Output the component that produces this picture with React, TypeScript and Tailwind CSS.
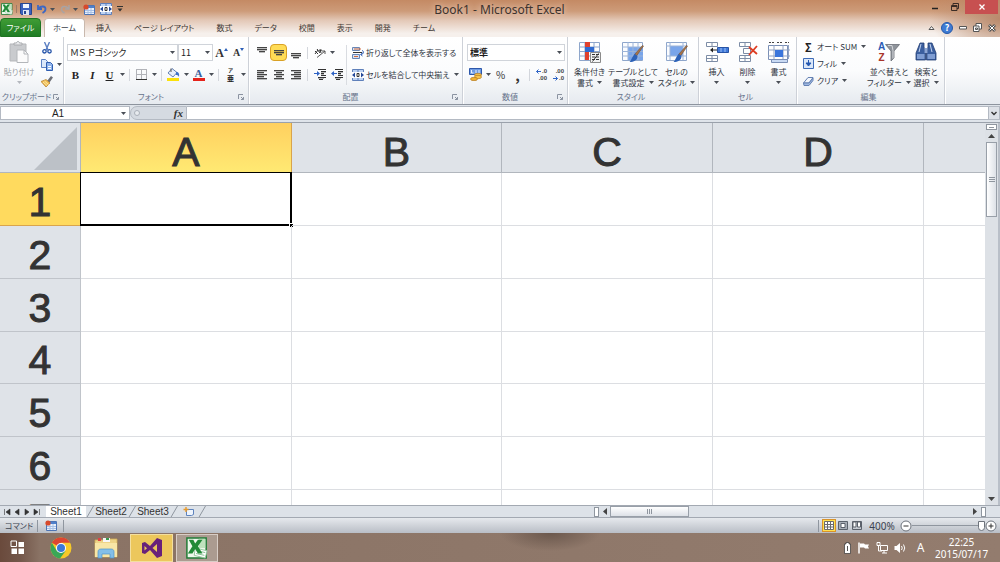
import React from 'react';
import clsx from 'clsx';

interface ChildrenProps {
  children: React.ReactNode;
}

interface IconProps extends ChildrenProps {
  w?: number;
  h?: number;
  box?: string;
}

const Icon: React.FC<IconProps> = ({ w = 14, h = 14, box, children }) => (
  <svg width={w} height={h} viewBox={box ?? `0 0 ${w} ${h}`} fill="none" className="shrink-0" aria-hidden="true">
    {children}
  </svg>
);

const Caret: React.FC<{ faded?: boolean }> = ({ faded }) => (
  <Icon w={5} h={3}>
    <path d="M0 0h5L2.5 3z" fill={faded ? '#b4b8be' : '#4a4f57'} />
  </Icon>
);

/* ---------- ribbon building blocks ---------- */

interface GroupProps extends ChildrenProps {
  label: string;
  className: string;
  launcher?: boolean;
}

const Group: React.FC<GroupProps> = ({ label, className, launcher, children }) => (
  <section
    aria-label={label}
    className={clsx('flex shrink-0 flex-col border-r border-[#cdd1d8] shadow-[1px_0_0_#ffffff]', className)}
  >
    <div className="flex h-[53px]">{children}</div>
    <div className="flex h-[13px] items-center pr-1 whitespace-nowrap text-[#66728a]">
      <span className="flex-1 text-center">{label}</span>
      {launcher && (
        <button aria-label={`${label}の詳細`}>
          <Icon w={6} h={6}>
            <path d="M0.5 5V0.5H5M3 3l2.5 2.5M5.5 3v2.500H3" stroke="#8b93a1" />
          </Icon>
        </button>
      )}
    </div>
  </section>
);

interface ToolProps extends ChildrenProps {
  label: string;
  active?: boolean;
  menu?: boolean;
}

const Tool: React.FC<ToolProps> = ({ label, active, menu, children }) => (
  <button aria-label={label} className="flex h-[17px] shrink-0 items-center">
    <span
      className={clsx(
        'flex h-[17px] w-[17px] items-center justify-center',
        active && 'rounded-sm border border-[#d9a126] bg-[#ffdc55]'
      )}
    >
      {children}
    </span>
    {menu && (
      <span className="flex w-2 justify-center">
        <Caret />
      </span>
    )}
  </button>
);

const Sep = () => <span className="mx-[3px] h-3 w-px shrink-0 bg-[#d3d6dc]" />;

interface BigToolProps extends ChildrenProps {
  lines: string[];
  className?: string;
  faded?: boolean;
}

const BigTool: React.FC<BigToolProps> = ({ lines, className, faded, children }) => (
  <button
    className={clsx(
      'flex shrink-0 flex-col items-center pt-1 leading-[11px] whitespace-nowrap',
      faded ? 'text-[#9a9da3]' : 'text-[#2f353f]',
      className
    )}
  >
    <span className="mb-[3px] flex h-[22px] items-center">{children}</span>
    <span>{lines[0]}</span>
    <span className="flex h-[11px] items-center gap-1">
      {lines[1]}
      <Caret faded={faded} />
    </span>
  </button>
);

const SmallTool: React.FC<ChildrenProps & { text: string; menu?: boolean }> = ({ text, menu, children }) => (
  <button className="flex h-[17px] items-center gap-[2px] whitespace-nowrap text-[#2f353f]">
    <span className="flex w-[13px] justify-center">{children}</span>
    {text}
    {menu && (
      <span className="ml-[2px]">
        <Caret />
      </span>
    )}
  </button>
);

interface SelectProps {
  label: string;
  value: string;
  options: string[];
  className: string;
}

const SelectBox: React.FC<SelectProps> = ({ label, value, options, className }) => (
  <div className={clsx('relative h-[17px] shrink-0 text-[9px]', className)}>
    <select
      aria-label={label}
      defaultValue={value}
      className="h-full w-full appearance-none border border-[#d0d4da] bg-white pl-[2px] text-[#1e1e1e] outline-none"
    >
      {options.map((o) => (
        <option key={o}>{o}</option>
      ))}
    </select>
    <span className="pointer-events-none absolute top-[7px] right-[3px]">
      <Caret />
    </span>
  </div>
);

/* ---------- icons ---------- */

const Lines: React.FC<{ rows: [number, number][]; y?: number }> = ({ rows, y = 0 }) => (
  <Icon w={12} h={12}>
    {rows.map(([x, width], i) => (
      <g key={i}>
        <path d={`M${x} ${y + i * 2 + 0.5}h${width}`} stroke="#444" />
        <path d={`M${x} ${y + i * 2 + 1.5}h${width}`} stroke="#444" strokeOpacity="0.35" />
      </g>
    ))}
  </Icon>
);

const ExcelLogo: React.FC<{ size: number }> = ({ size }) => (
  <Icon w={size} h={size} box="0 0 24 24">
    <path d="M1 1h21v22H1z" fill="#eef8ec" stroke="#1f7a34" strokeWidth="1.6" />
    <path d="M14 2h7v10h-7z" fill="#bfe2bd" />
    <path d="M10 12l13 3-2 8-12-3z" fill="#fff" stroke="#8fc498" />
    <path d="M12 15l9 2M11 18l9 2" stroke="#7dbb88" />
    <path d="M3 3h5l2 4 3-4h5l-5 7 5 8h-5l-3-5-3 5H2l5-8z" fill="#218a37" />
  </Icon>
);

const SaveIcon = () => (
  <Icon w={12} h={12}>
    <path d="M0.5 0.5h11v11h-10l-1-1z" fill="#3c62bd" stroke="#27468f" />
    <path d="M3 1h6v4H3z" fill="#f2f6fd" />
    <path d="M3 7h6v5H3z" fill="#dde5f3" />
    <path d="M4 8h2v3H4z" fill="#27468f" />
  </Icon>
);

const MacroIcon = () => (
  <Icon w={12} h={11}>
    <path d="M1.5 1.5h10v9h-10z" fill="#eaf1fb" stroke="#4d74b4" />
    <path d="M2 2h9v2H2z" fill="#4f80cb" />
    <path d="M2 6.5h9M2 8.5h9M5 4v6M8 4v6" stroke="#a7c0e6" />
    <circle cx="3" cy="3" r="2.6" fill="#d84a2c" />
  </Icon>
);

const MergeIcon = () => (
  <Icon w={12} h={12}>
    <path d="M0.5 0.5h11v11H0.5z" fill="#bdd2f2" stroke="#5f80ba" />
    <path d="M6 0v3M6 9v3" stroke="#5f80ba" />
    <path d="M0 3h12v6H0z" fill="#fff" />
    <path d="M0 6l3-2.500v5zM12 6L9 3.500v5z" fill="#24499a" />
    <path d="M5 4.500h2v3H5z" stroke="#333" />
  </Icon>
);

const WrapIcon = () => (
  <Icon w={12} h={12}>
    <path d="M0.5 0.5h7v3h-7zM0.5 7.5h7v4h-7z" fill="#d7e3f5" stroke="#6a86b5" />
    <path d="M1 5.5h9" stroke="#333" />
    <path d="M2 2h7M2 9.5h4" stroke="#d0683a" />
    <path d="M10 3.5c2 0 2 4-1 4M10.5 6L8.5 7.5 10.5 9" stroke="#3362b8" />
  </Icon>
);

const PasteIcon = () => (
  <Icon w={22} h={22}>
    <path d="M2 3h16v17H2z" fill="#c9cbce" stroke="#b5b7ba" />
    <path d="M6 4V2h2.5c0-2 3-2 3 0H14v2z" fill="#e9eaec" stroke="#a9abae" />
    <path d="M9 9h7l4 4v8.500H9z" fill="#fbfbfb" stroke="#b3b6ba" />
    <path d="M16 9v4h4" stroke="#b3b6ba" />
  </Icon>
);

const CutIcon = () => (
  <Icon w={10} h={12}>
    <path d="M2.500 0l3.500 8M7.500 0L4 8" stroke="#5b7fc2" strokeWidth="1.400" />
    <circle cx="2.500" cy="9.300" r="1.700" stroke="#2352a8" strokeWidth="1.300" />
    <circle cx="7.500" cy="9.300" r="1.700" stroke="#2352a8" strokeWidth="1.300" />
  </Icon>
);

const CopyIcon = () => (
  <Icon w={12} h={12}>
    <path d="M0.5 0.5h4l2 2v6h-6z" fill="#dbe8fa" stroke="#5c82c4" />
    <path d="M5.500 3.500h4l2 2v6h-6z" fill="#8fb4ec" stroke="#2f5db0" />
    <path d="M7 7.500h3M7 9.500h3" stroke="#fff" />
  </Icon>
);

const BrushIcon = () => (
  <Icon w={12} h={11}>
    <path d="M6 5l4-5 2 1.500-3.500 5z" fill="#6d6f77" />
    <path d="M0 5.500L5 3.500l4 3.500L5 11z" fill="#f0bd55" stroke="#b27a22" strokeWidth="0.700" />
    <path d="M2 6l4 3.500M3.500 5l4 3.500" stroke="#fff1b8" strokeWidth="0.800" />
  </Icon>
);

const BorderIcon = () => (
  <Icon w={11} h={11}>
    <path d="M0.5 0v10M5.500 0v10M10.500 0v10M0 0.500h11M0 5.500h11" stroke="#b1b3b8" />
    <path d="M0 10.500h11" stroke="#333" />
  </Icon>
);

const FillIcon = () => (
  <Icon w={13} h={13}>
    <path d="M5 0.500l5 4-4 4.500-5-4z" fill="#e7eefa" stroke="#6481b2" />
    <path d="M4 4V0.500" stroke="#555" />
    <path d="M9 4c3 0 3.500 2 3 5-1-2-2-2-3-2z" fill="#3e72c8" />
    <path d="M0 10h12v3H0z" fill="#fbe10a" />
  </Icon>
);

const OrientIcon = () => (
  <Icon w={12} h={12}>
    <path d="M1 4l3 3M3 2l3 4M1 7l3-4M6 2l1 4M5 4l3-1" stroke="#333" />
    <path d="M3 10.500L11 4M11 7V4H8" stroke="#555" />
  </Icon>
);

const IndentIcon: React.FC<{ flip?: boolean }> = ({ flip }) => (
  <Icon w={12} h={11}>
    <path d="M4 0.500h8M7 2.500h5M7 4.500h3M7 6.500h5M4 8.500h8M5 10.500h4" stroke="#333" />
    <path d="M7 3.500h5M7 5.500h3M4 9.500h6" stroke="#333" strokeOpacity="0.350" />
    <path d={flip ? 'M6 4.500L3 2v5zM0 4h3v1H0z' : 'M0 4.500L3 2v5zM3 4h3v1H3z'} fill="#2d62c4" />
  </Icon>
);

const MoneyIcon = () => (
  <Icon w={14} h={13}>
    <path d="M0.500 0.500h12v6h-12z" fill="#6f9be2" stroke="#2d57aa" />
    <path d="M2.500 2v3h2M7 2v3M10 2v3" stroke="#e8f0fc" />
    <ellipse cx="9" cy="7" rx="3.500" ry="1.700" fill="#f6c44e" stroke="#b47a1d" strokeWidth="0.700" />
    <ellipse cx="9" cy="9" rx="3.500" ry="1.700" fill="#f6c44e" stroke="#b47a1d" strokeWidth="0.700" />
    <ellipse cx="5" cy="11" rx="3.500" ry="1.700" fill="#f0b032" stroke="#b47a1d" strokeWidth="0.700" />
  </Icon>
);

const DecimalIcon: React.FC<{ less?: boolean }> = ({ less }) => (
  <span className="flex flex-col items-end font-['Liberation_Sans',sans-serif] text-[6px] leading-[7px] font-bold text-[#444]">
    <span className="flex items-center gap-px">
      {!less && <Icon w={5} h={5}><path d="M0.500 2.500H5M2.500 0.500l-2 2 2 2" stroke="#2d62c4" /></Icon>}
      {less ? '.00' : '.0'}
    </span>
    <span className="flex items-center gap-px">
      {less && <Icon w={5} h={5}><path d="M0 2.500h4.500M2.500 0.500l2 2-2 2" stroke="#2d62c4" /></Icon>}
      {less ? '.0' : '.00'}
    </span>
  </span>
);

const CondIcon = () => (
  <Icon w={24} h={22}>
    <path d="M1.500 1.500h20v18h-20zM1 6h20M1 10.500h20M1 15h20M7 1v18M16 1v18" stroke="#8ea6cb" />
    <path d="M7 1h5v5H7zM7 11h4v8H7z" fill="#e0402c" />
    <path d="M7 6h9v5H7z" fill="#2f6ad0" />
    <path d="M12.500 11.500h10v10h-10z" fill="#f4f4f4" stroke="#8a8a8a" />
    <path d="M17 13.500h-3M17 16h-3M17 18.500h-3M21 13.500h-3M21 16h-3M21 18.500h-3M14.500 20.500l6-8" stroke="#333" />
  </Icon>
);

const TableStyleIcon: React.FC<{ cell?: boolean }> = ({ cell }) => (
  <Icon w={24} h={22}>
    <path d="M1.500 1.500h20v18h-20z" fill="#fbfcfe" stroke="#8ea6cb" />
    <path d={cell ? 'M5 5h13v10H5z' : 'M7 6h15v13H7z'} fill="#79a5ea" />
    <path
      d={cell ? 'M1 5h21M1 15h21M5 1v18M18 1v18' : 'M1 6h21M1 10.500h21M1 15h21M7 1v18M12 1v18M17 1v18'}
      stroke="#9cb4d8"
    />
    <path d="M22.500 5l-7 10-2-1.500 8-9z" fill="#a87448" stroke="#6d4d36" strokeWidth="0.600" />
    <path d="M14 13l2.500 2c0 4-3.500 6-8 6 2-1.500 2.500-6 5.500-8z" fill="#2d62b8" />
  </Icon>
);

const InsertIcon = () => (
  <Icon w={24} h={22}>
    <path d="M1.500 1.500h11v4h-11zM7 1.500v4M1.500 14.500h11v6h-11zM7 14.500v6M1.500 17.500h11" fill="#fff" stroke="#7d8da6" />
    <path d="M12.500 6.500h11v5h-11z" fill="#3f78d8" stroke="#2753a5" />
    <path d="M16 7v4M20 7v4" stroke="#9dc0f5" />
    <path d="M6 9h6" stroke="#222" />
    <path d="M5 9l3-2.500v5z" fill="#222" />
  </Icon>
);

const DeleteIcon = () => (
  <Icon w={22} h={22}>
    <path d="M2.500 1.500h11v4h-11zM8 1.500v4M6.500 7.500h7v5h-7zM2.500 14.500h11v6h-11zM8 14.500v6M2.500 17.500h11" fill="#fff" stroke="#7d8da6" />
    <path d="M12 6l8 7M20 5l-8 9" stroke="#dd3c22" strokeWidth="1.800" />
  </Icon>
);

const FormatIcon = () => (
  <Icon w={24} h={22}>
    <path d="M1.500 4.500h19v14h-19z" fill="#fff" stroke="#7a8fb5" />
    <path d="M1 9h22M1 15h22M7 4v17M16 4v17M21.500 4v14" stroke="#91a3c3" />
    <path d="M8 9h8v7H8z" fill="#3b76dc" />
    <path d="M2 1.500h6M10 1.500h6M18 1.500h4" stroke="#444" strokeDasharray="2 1" />
    <path d="M4.500 18.500h16v3h-16z" fill="#c9daf3" stroke="#7a8fb5" />
  </Icon>
);

const SortIcon = () => (
  <span className="flex items-center">
    <span className="flex flex-col items-center font-['Liberation_Sans',sans-serif] text-[10px] leading-[11px] font-bold">
      <span className="text-[#2a5bb5]">A</span>
      <span className="text-[#a8342a]">Z</span>
    </span>
    <Icon w={15} h={18}>
      <path d="M0.500 1.500h14L9 8v7l-3 3V8z" fill="#8f949b" stroke="#6a6f76" strokeWidth="0.800" />
      <path d="M3 2.500h4l1 5v8" stroke="#d5d8dc" />
    </Icon>
  </span>
);

const FindIcon = () => (
  <Icon w={22} h={22}>
    <path d="M5 2h4v4l1.500 6v7H1v-7zM13 2h4l4 10v7h-9.500v-7L13 6z" fill="#3b5f9f" stroke="#253f73" strokeWidth="0.800" />
    <path d="M9.500 7h3v5h-3z" fill="#8ea8d6" />
    <path d="M2 13h7.500v5H2zM12.500 13H20v5h-7.500z" fill="#7f9dd2" />
    <path d="M6 3L4 11M15 3l2 8" stroke="#c5d5f0" />
  </Icon>
);

const ChromeIcon = () => (
  <Icon w={22} h={22} box="-11 -11 22 22">
    <circle r="10.500" fill="#f7c928" />
    <path d="M0 0L-9.100-5.250A10.500 10.500 0 0 1 9.100-5.250H0z" fill="#dd4632" />
    <path d="M-9.100-5.250A10.500 10.500 0 0 0-1 10.450L4.500 3-4.500 2.500z" fill="#3aa757" />
    <circle r="5" fill="#fff" />
    <circle r="4" fill="#3b78d8" />
  </Icon>
);

const FolderIcon = () => (
  <Icon w={25} h={24}>
    <path d="M1 4h10l2-1h10v18H1z" fill="#eed488" stroke="#d0ad55" strokeWidth="0.800" />
    <path d="M4 2h3v3H4z" fill="#d44" />
    <path d="M9 2h7v4H9z" fill="#f7f7f7" />
    <path d="M12 2h3v2h-3z" fill="#3a9a50" />
    <path d="M1 7h22v14H1z" fill="#f8e6a6" />
    <path d="M4 22v-6c0-2 1-3 3-3h10c2 0 3 1 3 3v6h-4v-4H8v4z" fill="#83bfe8" stroke="#4d93c9" strokeWidth="0.700" />
  </Icon>
);

const VisualStudioIcon = () => (
  <Icon w={22} h={22}>
    <path
      fillRule="evenodd"
      d="M1 6l3-1 5 4 7-8 5 2v16l-5 2-7-8-5 4-3-1zM3.500 9v4.500L6 11.200zM16 7l-4.500 4 4.500 4z"
      fill="#68217a"
    />
  </Icon>
);

/* ---------- window sections ---------- */

const TitleBar = () => (
  <header className="flex h-[18px] items-center">
    <div className="flex flex-1 items-center gap-[3px] pl-[1px]">
      <ExcelLogo size={12} />
      <span className="h-2 w-px bg-[#9d7a66]" />
      <div className="flex items-center gap-[5px]">
        <button aria-label="上書き保存"><SaveIcon /></button>
        <button aria-label="元に戻す" className="flex items-center gap-[3px]">
          <Icon w={10} h={10}>
            <path d="M1 1v4h4M1.500 4.500C4 1.500 8.500 2 8.500 5c0 2-1 3-3 4" stroke="#3d68c4" strokeWidth="1.800" />
          </Icon>
          <Caret />
        </button>
        <button aria-label="やり直し" className="flex items-center gap-[3px]">
          <Icon w={10} h={10}>
            <path d="M9 1v4H5M8.500 4.500C6 1.500 1.500 2 1.500 5c0 2 1 3 3 4" stroke="#a9a3a3" strokeWidth="1.400" />
          </Icon>
          <Caret />
        </button>
        <button aria-label="マクロの記録"><MacroIcon /></button>
        <button aria-label="セルの結合"><MergeIcon /></button>
        <button aria-label="クイック アクセス ツール バーのユーザー設定">
          <Icon w={6} h={6}>
            <path d="M0 0.500h6" stroke="#333" />
            <path d="M0.500 2.500h5L3 5.500z" fill="#333" />
          </Icon>
        </button>
      </div>
    </div>
    <h1 className="pt-[2px] font-['Noto_Sans','Noto_Sans_CJK_JP',sans-serif] text-[12px] leading-[16px] text-[#3d332e] [text-shadow:0_0_6px_#f5ddcf]">
      Book1 - Microsoft Excel
    </h1>
    <div className="flex h-full flex-1 justify-end pr-[2px]">
      <button aria-label="最小化" className="flex h-[14px] w-5 items-center justify-center">
        <Icon w={6} h={6}><path d="M0 4.500h6" stroke="#222" strokeWidth="1.500" /></Icon>
      </button>
      <button aria-label="元に戻す (縮小)" className="flex h-[14px] w-5 items-center justify-center">
        <Icon w={8} h={8}><path d="M2 2V0.500h5.500v5H6M0.500 2.500H6v5H0.500zM0.500 3.500H6" stroke="#3a2c25" /></Icon>
      </button>
      <button aria-label="閉じる" className="flex h-[14px] w-[33px] items-center justify-center bg-[#c75050]">
        <Icon w={6} h={6}><path d="M0.500 0.500l5 5M5.500 0.500l-5 5" stroke="#fff" strokeWidth="1.300" /></Icon>
      </button>
    </div>
  </header>
);

const tabs = ['挿入', 'ページ レイアウト', '数式', 'データ', '校閲', '表示', '開発', 'チーム'];

const RibbonTabs = () => (
  <nav className="flex h-[19px] items-stretch">
    <button className="w-[41px] rounded-t-sm border border-[#1e7522] bg-linear-to-b from-[#3f9c35] to-[#1f7d25] text-white">
      ファイル
    </button>
    <button className="ml-[3px] w-[41px] rounded-t-sm border border-b-0 border-[#c9b9ae] bg-white text-[#3c424c]">
      ホーム
    </button>
    <div className="flex flex-1">
      {tabs.map((t) => (
        <button key={t} className="px-[11px] whitespace-nowrap text-[#3f3834]">
          {t}
        </button>
      ))}
    </div>
    <div className="flex items-center gap-[6px] pr-1">
      <button aria-label="リボンの最小化">
        <Icon w={7} h={6}><path d="M1 4.500L3.500 1.500 6 4.500z" fill="#fff" stroke="#555" /></Icon>
      </button>
      <button aria-label="ヘルプ" className="flex h-3 w-3 items-center justify-center rounded-full border border-[#2558a8] bg-[#3f7bd3] text-[9px] font-bold text-white">
        ?
      </button>
      <button aria-label="ブックを最小化">
        <Icon w={8} h={4}><path d="M0.500 0.500h7v2.500h-7z" fill="#fff" stroke="#555" /></Icon>
      </button>
      <button aria-label="ブックを元のサイズに戻す">
        <Icon w={9} h={9}><path d="M3 3V0.500h5.500V6H6M0.500 3H6v5.500H0.500zM2.500 5h2v1.500h-2z" fill="#fff" stroke="#555" /></Icon>
      </button>
      <button aria-label="ブックを閉じる">
        <Icon w={8} h={8}>
          <path d="M1 1l6 6M7 1L1 7" stroke="#555" strokeWidth="2.800" />
          <path d="M1.500 1.500l5 5M6.500 1.500l-5 5" stroke="#fff" />
        </Icon>
      </button>
    </div>
  </nav>
);

const Ribbon = () => (
  <div className="flex h-[68px] shrink-0 overflow-hidden border-b border-[#8d949e] bg-linear-to-b from-white via-[#fbfcfd] to-[#e6eaef]">
    <Group label="クリップボード" className="w-16" launcher>
      <BigTool lines={['貼り付け']} className="w-[38px]" faded>
        <PasteIcon />
      </BigTool>
      <div className="flex flex-col pt-[2px]">
        <Tool label="切り取り"><CutIcon /></Tool>
        <Tool label="コピー" menu><CopyIcon /></Tool>
        <Tool label="書式のコピー/貼り付け"><BrushIcon /></Tool>
      </div>
    </Group>

    <Group label="フォント" className="w-[185px]" launcher>
      <div className="flex flex-col gap-[5px] pt-[7px] pl-[3px]">
        <div className="flex">
          <SelectBox label="フォント名" value="ＭＳ Ｐゴシック" options={['ＭＳ Ｐゴシック', 'メイリオ']} className="w-[111px]" />
          <SelectBox label="フォント サイズ" value="11" options={['9', '10', '11', '12']} className="w-[35px]" />
          <Tool label="フォント サイズの拡大">
            <span className="font-['Liberation_Serif',serif] text-[12px] font-bold text-[#333]">A</span>
            <Icon w={4} h={9}><path d="M0 3l2-3 2 3z" fill="#2d5fb8" /></Icon>
          </Tool>
          <Tool label="フォント サイズの縮小">
            <span className="font-['Liberation_Serif',serif] text-[10px] font-bold text-[#333]">A</span>
            <Icon w={4} h={9}><path d="M0 0h4L2 3z" fill="#2d5fb8" /></Icon>
          </Tool>
        </div>
        <div className="flex items-center font-['Liberation_Serif',serif] text-[11px] text-[#222]">
          <Tool label="太字"><b>B</b></Tool>
          <Tool label="斜体"><i className="font-bold">I</i></Tool>
          <Tool label="下線" menu><b className="underline">U</b></Tool>
          <Sep />
          <Tool label="罫線" menu><BorderIcon /></Tool>
          <Sep />
          <Tool label="塗りつぶしの色" menu><FillIcon /></Tool>
          <Tool label="フォントの色" menu>
            <span className="w-3 border-b-3 border-[#e5231b] text-center leading-[10px] font-bold text-[#3a5f9d]">A</span>
          </Tool>
          <Sep />
          <Tool label="ふりがな" menu>
            <span className="flex flex-col items-center font-['Noto_Sans_CJK_JP',sans-serif] font-bold">
              <span className="text-[5px] leading-[7px]">ア</span>
              <span className="text-[7px] leading-[10px]">亜</span>
            </span>
          </Tool>
        </div>
      </div>
    </Group>

    <Group label="配置" className="w-[214px]" launcher>
      <div className="flex flex-col gap-[5px] pt-[7px] pl-1">
        <div className="flex items-center">
          <Tool label="上揃え"><Lines rows={[[1, 10], [1, 10], [3, 6]]} /></Tool>
          <Tool label="上下中央揃え" active><Lines rows={[[1, 10], [1, 10], [3, 6]]} y={3} /></Tool>
          <Tool label="下揃え"><Lines rows={[[1, 10], [1, 10], [3, 6]]} y={6} /></Tool>
          <Sep />
          <Tool label="方向" menu><OrientIcon /></Tool>
        </div>
        <div className="flex items-center">
          <Tool label="左揃え"><Lines rows={[[1, 10], [1, 7], [1, 10], [1, 7], [1, 10]]} y={1} /></Tool>
          <Tool label="中央揃え"><Lines rows={[[1, 10], [3, 6], [1, 10], [3, 6], [1, 10]]} y={1} /></Tool>
          <Tool label="右揃え"><Lines rows={[[1, 10], [4, 7], [1, 10], [4, 7], [1, 10]]} y={1} /></Tool>
          <Sep />
          <Tool label="インデントを減らす"><IndentIcon flip /></Tool>
          <Tool label="インデントを増やす"><IndentIcon /></Tool>
        </div>
      </div>
      <span className="mt-2 ml-px h-10 w-px bg-[#d9dce1]" />
      <div className="flex flex-col gap-[5px] pt-[7px] pl-1">
        <SmallTool text="折り返して全体を表示する"><WrapIcon /></SmallTool>
        <SmallTool text="セルを結合して中央揃え" menu><MergeIcon /></SmallTool>
      </div>
    </Group>

    <Group label="数値" className="w-[105px]" launcher>
      <div className="flex flex-col gap-[5px] pt-[7px] pl-1">
        <SelectBox label="表示形式" value="標準" options={['標準', '数値', '通貨']} className="w-[98px] font-bold" />
        <div className="flex items-center text-[10px] text-[#333]">
          <Tool label="通貨表示形式" menu><MoneyIcon /></Tool>
          <Tool label="パーセント スタイル">%</Tool>
          <Tool label="桁区切りスタイル"><b className="text-[14px] leading-[14px]">,</b></Tool>
          <Sep />
          <Tool label="小数点以下の表示桁数を増やす"><DecimalIcon /></Tool>
          <Tool label="小数点以下の表示桁数を減らす"><DecimalIcon less /></Tool>
        </div>
      </div>
    </Group>

    <Group label="スタイル" className="w-[131px]">
      <BigTool lines={['条件付き', '書式']} className="w-[43px]"><CondIcon /></BigTool>
      <BigTool lines={['テーブルとして', '書式設定']} className="w-11"><TableStyleIcon /></BigTool>
      <BigTool lines={['セルの', 'スタイル']} className="w-[43px]"><TableStyleIcon cell /></BigTool>
    </Group>

    <Group label="セル" className="w-[98px]">
      <BigTool lines={['挿入']} className="ml-[2px] w-[31px]"><InsertIcon /></BigTool>
      <BigTool lines={['削除']} className="w-[31px]"><DeleteIcon /></BigTool>
      <BigTool lines={['書式']} className="w-[31px]"><FormatIcon /></BigTool>
    </Group>

    <Group label="編集" className="w-[148px]">
      <div className="flex w-[72px] flex-col pt-px pl-[5px]">
        <SmallTool text="オート SUM" menu>
          <b className="text-[11px] text-[#222]">Σ</b>
        </SmallTool>
        <SmallTool text="フィル" menu>
          <Icon w={11} h={11}>
            <path d="M0.500 0.500h10v10h-10z" fill="#dbe7f8" stroke="#3f6cb8" />
            <path d="M5.500 2v5M3 5l2.500 3L8 5z" stroke="#2356b0" fill="#2356b0" />
          </Icon>
        </SmallTool>
        <SmallTool text="クリア" menu>
          <Icon w={11} h={10}>
            <path d="M0.500 7L5 1.500h5L6 7z" fill="#f3f6fb" stroke="#6481b2" />
            <path d="M0.500 7H6l4-5v2.500L6 9.500H1z" fill="#9fb8e2" stroke="#6481b2" />
          </Icon>
        </SmallTool>
      </div>
      <BigTool lines={['並べ替えと', 'フィルター']} className="w-10"><SortIcon /></BigTool>
      <BigTool lines={['検索と', '選択']} className="w-[34px]"><FindIcon /></BigTool>
    </Group>
    <div className="flex-1" />
  </div>
);

const FormulaBar = () => (
  <div className="flex h-[18px] shrink-0 items-stretch border-b border-[#9aa1ab] bg-[#dfe4ea] pt-px pb-[2px]">
    <div className="relative w-[130px]">
      <input
        aria-label="名前ボックス"
        defaultValue="A1"
        className="h-full w-full border border-[#b4bac3] bg-white pr-[14px] text-center font-['Liberation_Sans',sans-serif] text-[10px] text-[#222] outline-none"
      />
      <span className="pointer-events-none absolute top-[6px] right-1"><Caret /></span>
    </div>
    <div className="flex w-[57px] items-center justify-between rounded-l-full border border-[#b4bac3] bg-[#d5dae1] px-[3px]">
      <span className="h-[6px] w-[6px] rounded-full border border-[#aab0b9] bg-[#e8ebef]" />
      <button aria-label="関数の挿入" className="font-['Liberation_Serif',serif] text-[11px] leading-[11px] font-bold text-[#333] italic">
        fx
      </button>
    </div>
    <input aria-label="数式バー" className="min-w-0 flex-1 border-y border-[#b4bac3] bg-white px-1 outline-none" />
    <button aria-label="数式バーの展開" className="flex w-3 items-center justify-center border border-[#b4bac3] bg-[#dde1e7]">
      <Icon w={6} h={5}><path d="M0.500 1L3 3.500 5.500 1" stroke="#333" strokeWidth="1.400" /></Icon>
    </button>
  </div>
);

const columns = ['A', 'B', 'C', 'D', ''];
const rows = [1, 2, 3, 4, 5, 6, 7];

const Sheet = () => (
  <main className="flex min-h-0 flex-1 overflow-hidden border-r-2 border-[#b9bfc8] bg-white">
    <div className="min-w-0 flex-1 overflow-hidden">
      <table className="w-full table-fixed border-separate border-spacing-0 font-['Liberation_Sans',sans-serif] text-[41px] leading-[46px] text-[#333] [-webkit-text-stroke:1px_#333]">
        <colgroup>
          <col className="w-[81px]" />
          <col className="w-[211px]" />
          <col className="w-[210px]" />
          <col className="w-[211px]" />
          <col className="w-[211px]" />
          <col />
        </colgroup>
        <thead>
          <tr>
            <th className="h-[50px] border-r border-b border-[#b1b6bd] bg-[#dfe3e8] p-0" aria-label="すべて選択">
              <div className="flex h-[48px] items-end justify-end pr-[3px] pb-[2px]">
                <Icon w={43} h={43}><path d="M43 0v43H0z" fill="#bcc1c7" /></Icon>
              </div>
            </th>
            {columns.map((c, i) => (
              <th
                key={i}
                scope="col"
                className={clsx(
                  'h-[50px] border-r border-b p-0 pt-[9px] text-center leading-[40px] font-normal',
                  i === 0
                    ? 'border-[#d9a44c] bg-linear-to-b from-[#ffd05f] to-[#ffe973]'
                    : 'border-[#b1b6bd] bg-[#dfe3e8]',
                  i === columns.length - 1 && 'border-r-0'
                )}
              >
                {c}
              </th>
            ))}
          </tr>
        </thead>
        <tbody>
          {rows.map((r) => (
            <tr key={r} className={r === 4 ? 'h-[52px]' : 'h-[53px]'}>
              <th
                scope="row"
                className={clsx(
                  'border-r border-b p-0 pt-[5px] text-center font-normal',
                  r === 1 ? 'border-[#d9a44c] bg-[#ffda5e]' : 'border-[#c0c4ca] bg-[#dfe3e8]'
                )}
              >
                {r}
              </th>
              {columns.map((c, i) => (
                <td
                  key={i}
                  className={clsx('relative border-b border-[#dcdee2] p-0', i < columns.length - 1 && 'border-r')}
                >
                  {r === 1 && i === 0 && (
                    <div className="absolute -top-px -right-px -bottom-px -left-px border border-r-2 border-b-2 border-black">
                      <span className="absolute -right-[3px] -bottom-[3px] h-1 w-1 border-t border-l border-white bg-black" />
                    </div>
                  )}
                </td>
              ))}
            </tr>
          ))}
        </tbody>
      </table>
    </div>
    <div className="flex w-[13px] flex-col items-center bg-[#dde1e6]">
      <span className="mt-px flex h-[6px] w-[11px] items-center justify-center border border-[#8f969f] bg-white">
        <span className="h-px w-[5px] bg-[#8f969f]" />
      </span>
      <button aria-label="上へスクロール" className="flex h-3 items-center">
        <Icon w={7} h={4}><path d="M0 4l3.500-4L7 4z" fill="#444" /></Icon>
      </button>
      <span className="flex h-[75px] w-[11px] flex-col items-center justify-center gap-px border border-[#989fa8] bg-linear-to-r from-white to-[#dde1e7]">
        <span className="h-px w-[6px] bg-[#8f969f]" />
        <span className="h-px w-[6px] bg-[#8f969f]" />
        <span className="h-px w-[6px] bg-[#8f969f]" />
      </span>
      <span className="flex-1" />
      <button aria-label="下へスクロール" className="flex h-3 items-center">
        <Icon w={7} h={4}><path d="M0 0h7L3.500 4z" fill="#444" /></Icon>
      </button>
    </div>
  </main>
);

const navIcons = [
  { label: '最初のシート', d: 'M1.500 1v6M7 1L3 4l4 3z' },
  { label: '前のシート', d: 'M6 1L2 4l4 3z' },
  { label: '次のシート', d: 'M2 1l4 3-4 3z' },
  { label: '最後のシート', d: 'M6.500 1v6M1 1l4 3-4 3z' },
];

const Slash = () => (
  <Icon w={8} h={12}>
    <path d="M0.500 12L7.500 0" stroke="#8f969f" />
  </Icon>
);

const SheetTabs = () => (
  <div className="flex h-3 shrink-0 items-center border-t border-[#a3a9b2] bg-[#dde2e8] font-['Liberation_Sans',sans-serif] text-[10px] leading-[11px] text-[#333]">
    <div className="flex w-[46px] items-center gap-[2px] pl-[3px]">
      {navIcons.map((n) => (
        <button key={n.label} aria-label={n.label}>
          <Icon w={8} h={8}><path d={n.d} fill="#333" /><path d={n.d} stroke="#333" strokeWidth="0.600" /></Icon>
        </button>
      ))}
    </div>
    <button className="h-full w-10 bg-white">Sheet1</button>
    <Slash />
    <button className="w-[34px]">Sheet2</button>
    <Slash />
    <button className="w-[34px]">Sheet3</button>
    <Slash />
    <button aria-label="ワークシートの挿入" className="flex w-5 justify-center">
      <Icon w={11} h={9}>
        <path d="M3.500 2.500h7v5l-2 1h-5z" fill="#eef4fc" stroke="#5e83bd" />
        <path d="M3 0v5M0.500 2.500h5" stroke="#e79a2c" strokeWidth="1.400" />
      </Icon>
    </button>
    <Slash />
    <div className="flex-1" />
    <div className="flex h-full w-[406px] items-center">
      <span className="h-[10px] w-[5px] border border-[#8f969f] bg-white" />
      <button aria-label="左へスクロール" className="flex w-[11px] justify-center">
        <Icon w={4} h={7}><path d="M4 0v7L0 3.500z" fill="#444" /></Icon>
      </button>
      <span className="flex h-full w-[79px] items-center justify-center gap-px border border-[#989fa8] bg-linear-to-b from-white to-[#dde1e7]">
        <span className="h-[5px] w-px bg-[#8f969f]" />
        <span className="h-[5px] w-px bg-[#8f969f]" />
        <span className="h-[5px] w-px bg-[#8f969f]" />
      </span>
      <span className="flex-1" />
      <button aria-label="右へスクロール" className="mr-1">
        <Icon w={4} h={7}><path d="M0 0l4 3.500L0 7z" fill="#444" /></Icon>
      </button>
      <span className="mr-[14px] h-[10px] w-[5px] border border-[#8f969f] bg-white" />
    </div>
  </div>
);

const StatusBar = () => (
  <footer className="flex h-4 shrink-0 items-center border-t border-[#a3a9b2] bg-linear-to-b from-[#e6e9ed] to-[#b9bec6] pr-[3px] text-[#3b4350]">
    <span className="w-[37px] pl-[5px]">コマンド</span>
    <span className="h-3 w-px bg-[#8f969f]" />
    <button aria-label="マクロの記録" className="flex w-[25px] justify-center"><MacroIcon /></button>
    <span className="h-3 w-px bg-[#8f969f]" />
    <div className="flex-1" />
    <span className="mr-[3px] h-3 w-px bg-[#8f969f]" />
    <button aria-label="標準" className="flex h-[13px] w-[14px] items-center justify-center border border-[#d9932a] bg-[#ffe04f]">
      <Icon w={10} h={9}><path d="M0.500 0.500h9v8h-9zM0 3.500h10M0 6h10M3.500 0v9M6.500 0v9" fill="#fff" stroke="#6b6b6b" /></Icon>
    </button>
    <button aria-label="ページ レイアウト" className="flex w-[14px] justify-center">
      <Icon w={10} h={9}><path d="M0.500 0.500h9v8h-9z" fill="#a7adb6" stroke="#5b616b" /><path d="M3 2.500h4v4H3z" fill="#fff" stroke="#5b616b" /></Icon>
    </button>
    <button aria-label="改ページ プレビュー" className="flex w-[14px] justify-center">
      <Icon w={10} h={9}><path d="M0.500 0.500h9v8h-9z" fill="#c5cad1" stroke="#5b616b" /><path d="M1 1h3v5H1zM5.500 1h3v5h-3z" fill="#fff" stroke="#5b616b" /></Icon>
    </button>
    <button className="w-9 text-center font-['Noto_Sans',sans-serif] text-[10px]">400%</button>
    <button aria-label="縮小">
      <Icon w={12} h={12}><circle cx="6" cy="6" r="5" fill="#fff" stroke="#6d737c" /><path d="M3.500 6h5" stroke="#333" /></Icon>
    </button>
    <input
      type="range"
      aria-label="ズーム"
      min={10}
      max={400}
      defaultValue={400}
      className="h-3 w-[73px] appearance-none bg-[linear-gradient(#8f969f,#8f969f)] bg-[length:100%_1px] bg-center bg-no-repeat [&::-webkit-slider-thumb]:h-[10px] [&::-webkit-slider-thumb]:w-[7px] [&::-webkit-slider-thumb]:appearance-none [&::-webkit-slider-thumb]:rounded-b-sm [&::-webkit-slider-thumb]:border [&::-webkit-slider-thumb]:border-[#6d737c] [&::-webkit-slider-thumb]:bg-white"
    />
    <button aria-label="拡大">
      <Icon w={12} h={12}><circle cx="6" cy="6" r="5" fill="#fff" stroke="#6d737c" /><path d="M3.500 6h5M6 3.500v5" stroke="#333" /></Icon>
    </button>
  </footer>
);

const Taskbar = () => (
  <div className="flex h-[29px] shrink-0 items-center bg-[radial-gradient(ellipse_50px_18px_at_55%_0,#6b584d,transparent),linear-gradient(to_right,#6a4a3c,#73574a_2%,#8a7365_4%,#937c6e)] text-white">
    <button aria-label="スタート" className="flex w-[34px] justify-center">
      <Icon w={15} h={15}>
        <path d="M1 1h5.500v5.500H1z" stroke="#fff" />
        <path d="M8.500 2H14v5H8.500zM1.500 8.500h5.500V14H1.500zM8.500 8.500H14v5.500H8.500z" fill="#fff" />
      </Icon>
    </button>
    <button aria-label="Google Chrome" className="ml-1 flex w-[46px] justify-center"><ChromeIcon /></button>
    <button aria-label="エクスプローラー" className="flex w-11 justify-center"><FolderIcon /></button>
    <button aria-label="Visual Studio" className="ml-[2px] flex h-7 w-[43px] items-center justify-center border border-[#f3dfa0] bg-[#ecc75c]">
      <VisualStudioIcon />
    </button>
    <button aria-label="Microsoft Excel" className="ml-[3px] flex h-7 w-[42px] items-center justify-center border border-[#d8cdc6] bg-[#ab9b90]">
      <ExcelLogo size={22} />
    </button>
    <div className="flex-1" />
    <div className="flex items-center gap-[6px]">
      <Icon w={9} h={12}><path d="M1.500 2H3V0.500h3V2h1.500v9.500h-6z" fill="#fff" stroke="#333" strokeWidth="0.700" /><path d="M4 4h1v5H4z" fill="#555" /></Icon>
      <Icon w={12} h={12}><path d="M1 0.500v11" stroke="#fff" strokeWidth="1.500" /><path d="M2 1.500h4l1 1h4l-1 2 1 2H7l-1-1H2z" fill="#fff" /></Icon>
      <Icon w={12} h={12}><path d="M4.500 3.500h7v5h-7zM6 11h5M8 8.500V11M1 0.500h3v3H1zM2.500 3.500V9H6" stroke="#fff" /></Icon>
      <Icon w={12} h={12}><path d="M0.500 4h2L6 1v10L2.500 8h-2z" fill="#fff" /><path d="M7.500 4q1.500 2 0 4M9.500 2.500q2.500 3.500 0 7" stroke="#fff" /></Icon>
    </div>
    <span className="w-[29px] text-center font-['Noto_Sans',sans-serif] text-[12px]">A</span>
    <div className="w-[53px] text-center font-['Noto_Sans',sans-serif] text-[10px] leading-3 whitespace-nowrap">
      <div>22:25</div>
      <div>2015/07/17</div>
    </div>
    <div className="w-3" />
  </div>
);

const App: React.FC = () => (
  <div className="flex h-screen min-h-[300px] flex-col overflow-hidden bg-[#dfe4ea] font-['Noto_Sans_CJK_JP',sans-serif] text-[8px] leading-[12px] [font-feature-settings:'palt']">
    <div className="shrink-0 bg-[radial-gradient(ellipse_70px_40px_at_100%_50%,#b98a6c,transparent),linear-gradient(#c48a64,#cd9b79_30%,#e3c8b7_55%,#f6f0ec_90%)]">
      <TitleBar />
      <RibbonTabs />
    </div>
    <Ribbon />
    <FormulaBar />
    <Sheet />
    <SheetTabs />
    <StatusBar />
    <Taskbar />
  </div>
);

export default App;
